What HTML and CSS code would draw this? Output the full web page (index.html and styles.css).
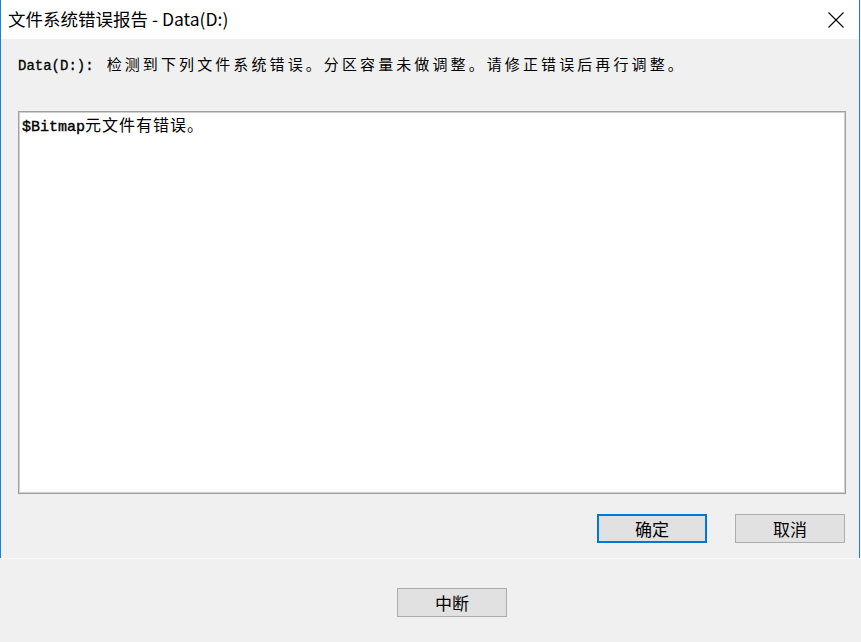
FILE: index.html
```html
<!DOCTYPE html>
<html lang="zh-CN">
<head>
<meta charset="utf-8">
<title>文件系统错误报告 - Data(D:)</title>
<link rel="stylesheet" href="styles.css">
</head>
<body>
<div class="window">
  <div class="titlebar">
    <span class="title">文件系统错误报告 - Data(D:)</span>
    <svg class="close" width="16" height="16" viewBox="0 0 16 16"><path d="M0.5 0.5 L15.5 15.5 M15.5 0.5 L0.5 15.5" stroke="#000" stroke-width="1.1" fill="none"/></svg>
  </div>
  <div class="content">
    <div class="message"><span class="mono">Data(D:):</span><span class="cjk">检测到下列文件系统错误。分区容量未做调整。请修正错误后再行调整。</span></div>
    <div class="listbox">
      <div class="item"><span class="mono2">$Bitmap</span><span class="cjk2">元文件有错误。</span></div>
    </div>
    <div class="buttons">
      <button class="btn btn-default">确定</button>
      <button class="btn">取消</button>
    </div>
  </div>
</div>
<div class="bottom">
  <button class="btn">中断</button>
</div>
</body>
</html>
```
FILE: styles.css
```css
html, body {
  margin: 0;
  padding: 0;
  background: #f0f0f0;
  width: 861px;
  height: 642px;
  overflow: hidden;
}
.window {
  width: 860px;
  box-sizing: border-box;
  border-left: 1px solid #1883d7;
  border-right: 1px solid #1883d7;
  background: #f0f0f0;
}
.titlebar {
  height: 39px;
  background: #ffffff;
  display: flex;
  align-items: center;
  padding-left: 7px;
  padding-right: 15px;
}
.title {
  font-family: "Noto Sans CJK SC", "Noto Sans", sans-serif;
  font-size: 17.5px;
  color: #000;
  line-height: 20px;
  margin-top: -1px;
}
.close {
  margin-left: auto;
}
.content {
  padding: 15px 13px 15px 17px;
  display: flex;
  flex-direction: column;
}
.message {
  height: 20px;
  line-height: 20px;
  white-space: nowrap;
  color: #000;
}
.mono {
  font-family: "Liberation Mono", "DejaVu Sans Mono", monospace;
  font-size: 14px;
  -webkit-text-stroke: 0.3px #000;
}
.cjk {
  font-family: "Noto Sans CJK SC", sans-serif;
  font-size: 15px;
  letter-spacing: 3.1px;
  margin-left: 13px;
}
.listbox {
  margin-top: 37px;
  height: 383px;
  box-sizing: border-box;
  background: #ffffff;
  border: 1px solid #a0a0a0;
  box-shadow: inset 1px 1px 0 #cfcfcf, inset -1px -1px 0 #cfcfcf;
  padding: 2px 3px;
}
.item {
  line-height: 20px;
  white-space: nowrap;
  color: #000;
}
.mono2 {
  font-family: "Liberation Mono", "DejaVu Sans Mono", monospace;
  font-size: 15px;
  -webkit-text-stroke: 0.4px #000;
}
.cjk2 {
  font-family: "Noto Sans CJK SC", sans-serif;
  font-size: 16px;
  letter-spacing: 1px;
}
.buttons {
  margin-top: 20px;
  display: flex;
  justify-content: flex-end;
  gap: 28px;
  padding-right: 1px;
}
.btn {
  width: 110px;
  height: 29px;
  box-sizing: border-box;
  background: #e1e1e1;
  border: 1px solid #adadad;
  font-family: "Noto Sans CJK SC", sans-serif;
  font-size: 17px;
  color: #000;
  padding: 0;
  margin: 0;
  line-height: 25px;
}
.btn-default {
  border: 2px solid #0078d7;
}
.bottom {
  border-top: 1px solid #f7f7f7;
  padding-top: 29px;
  padding-left: 397px;
  height: 83px;
  box-sizing: border-box;
}
```
